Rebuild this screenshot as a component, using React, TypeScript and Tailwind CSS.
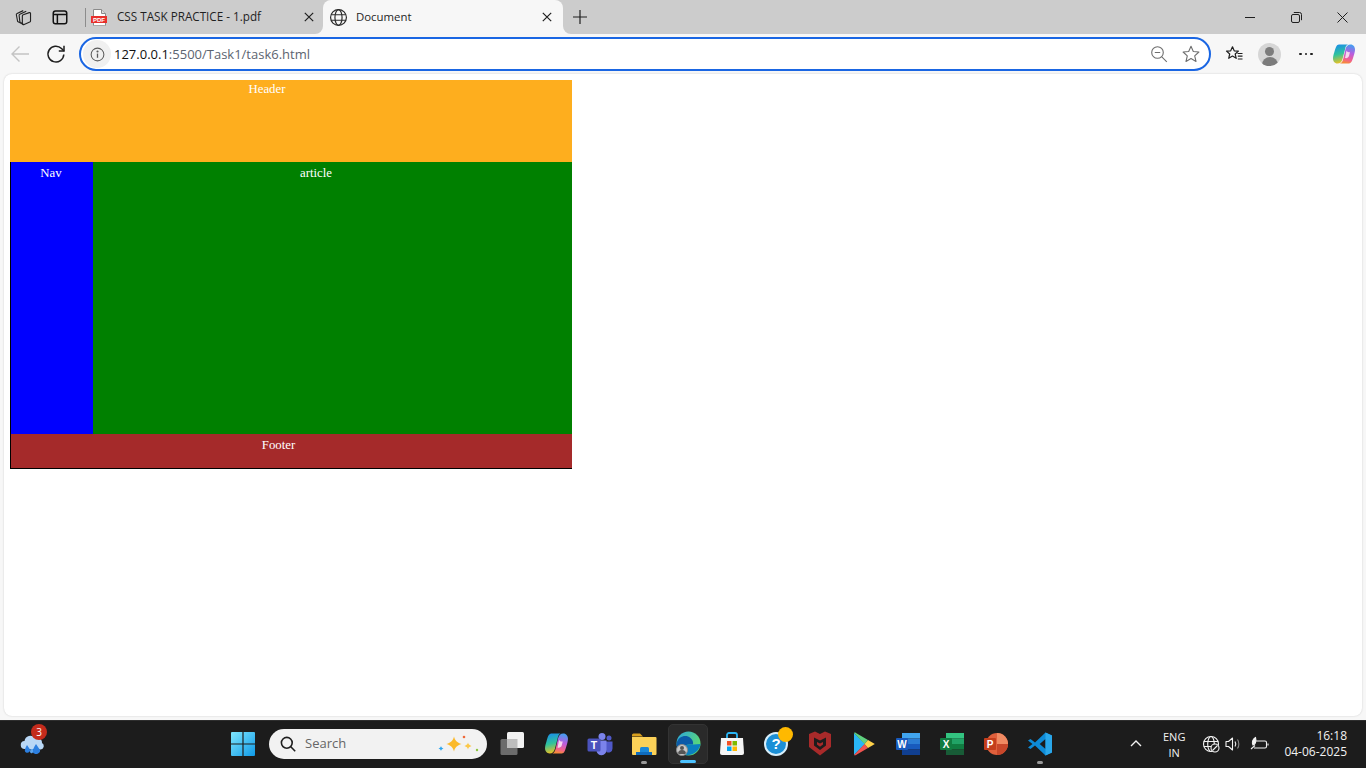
import React from "react";

const UI_FONT = "font-['Open_Sans','Noto_Sans',sans-serif]";

interface IconProps {
  size?: number;
  className?: string;
}

const Svg: React.FC<IconProps & { children: React.ReactNode }> = ({ size = 20, className, children }) => (
  <svg width={size} height={size} viewBox="0 0 24 24" fill="none" className={className}>
    {children}
  </svg>
);

const CloseIcon = () => (
  <svg width="10" height="10" viewBox="0 0 10 10" stroke="#1f1f1f" strokeWidth="1.2">
    <path d="M.8.8l8.4 8.4M9.2.8L.8 9.2" />
  </svg>
);

const CollectionsIcon = () => (
  <Svg size={18}>
    <g stroke="#222" strokeWidth="1.500" strokeLinejoin="round">
      <path d="M10 21.500L3.500 18 1.800 9c-.2-.8.2-1.400 1-1.700L11 3.500" />
      <path d="M11 21.500l-4.500-3-1-8.500c-.1-.8.2-1.400 1-1.700L15 4.200" />
      <path d="M9.800 10.500c0-.8.400-1.300 1.200-1.500l8-2.800c1-.3 1.700.2 1.700 1.200v9.800c0 .8-.3 1.300-1 1.600l-7.500 3.200c-1.300.5-2.400-.2-2.400-1.500z" />
    </g>
  </Svg>
);

const TabsIcon = () => (
  <Svg size={18}>
    <rect x="3" y="4" width="18" height="17" rx="3" stroke="#111" strokeWidth="2" />
    <path d="M3 8.500h18M8.500 8.500V21" stroke="#111" strokeWidth="2" />
  </Svg>
);

const PdfIcon = () => (
  <svg width="16" height="17" viewBox="0 0 16 17">
    <path d="M2.500.5h8l4 4v11.500a.8.8 0 0 1-.8.8H3.300a.8.8 0 0 1-.8-.8z" fill="#fff" stroke="#8a8a8a" />
    <path d="M10.500.5v4h4" fill="#ddd" stroke="#8a8a8a" />
    <rect x="0" y="7" width="16" height="7" fill="#e8302c" />
    <text x="8" y="12.800" textAnchor="middle" fontSize="6" fontWeight="700" fill="#fff" fontFamily="Liberation Sans">PDF</text>
  </svg>
);

const GlobeIcon = () => (
  <Svg size={19}>
    <g stroke="#2b2b2b" strokeWidth="1.500">
      <circle cx="12" cy="12" r="10" />
      <ellipse cx="12" cy="12" rx="4.500" ry="10" />
      <path d="M2.600 8.500h18.800M2.600 15.500h18.800" />
    </g>
  </Svg>
);

const CopilotIcon: React.FC<{ size?: number; id: string }> = ({ size = 24, id }) => (
  <svg width={size} height={size} viewBox="0 0 24 24">
    <defs>
      <linearGradient id={`${id}A`} x1="0.300" y1="0" x2="0.500" y2="1">
        <stop offset="0" stopColor="#1a8fe8" />
        <stop offset="0.500" stopColor="#2fc39c" />
        <stop offset="1" stopColor="#f6c21c" />
      </linearGradient>
      <linearGradient id={`${id}B`} x1="0.700" y1="0" x2="0.500" y2="1">
        <stop offset="0" stopColor="#3fa0f2" />
        <stop offset="0.450" stopColor="#b85de0" />
        <stop offset="0.800" stopColor="#f2608f" />
        <stop offset="1" stopColor="#f58a3a" />
      </linearGradient>
    </defs>
    <path d="M7 2.500h9c-2 .8-2.500 2.500-3 5L10.500 17c-.8 3-2.300 4.500-5 4.500C2.500 21.500 1 19 1 16.500c0-2 .6-4.200 1.300-6.300C3.500 6 4.500 2.500 7 2.500z" fill={`url(#${id}A)`} />
    <path d="M17 21.500H8c2-.8 2.700-2.500 3.300-5L13.500 7c.8-3 2.300-4.500 5-4.500 3 0 4.500 2.500 4.500 5 0 2-.6 4.200-1.300 6.300C20.500 18 19.500 21.500 17 21.500z" fill={`url(#${id}B)`} />
    <path d="M14.500 8.500c.5 1.500 2 2 3.500 1.500l-1 4c-.5 1.500-2 2.500-4 2z" fill="#f7d7ee" />
  </svg>
);

const Toolbar = () => (
  <div className="flex items-center h-[40px] bg-[#f7f7f7] shrink-0">
    <div className="w-[40px] flex justify-center">
      <svg width="20" height="18" viewBox="0 0 20 18" fill="none" stroke="#c4c4c4" strokeWidth="1.400">
        <path d="M19 9H2M9.500 1.500L2 9l7.500 7.500" />
      </svg>
    </div>
    <div className="w-[32px] flex justify-center">
      <svg width="20" height="20" viewBox="0 0 20 20" fill="none" stroke="#1f1f1f" strokeWidth="1.500">
        <path d="M17.800 10.500a7.900 7.900 0 1 1-2.300-6L18 7" />
        <path d="M18 1.800V7h-5.200" />
      </svg>
    </div>
    <div className="ml-[7px] w-[1132px] h-[34px] rounded-full border-2 border-[#1a66e3] bg-white flex items-center pl-[2px] pr-[9px]">
      <div className="w-[28px] h-[28px] rounded-full bg-[#f0f0f0] flex items-center justify-center">
        <svg width="15" height="15" viewBox="0 0 16 16" fill="none" stroke="#5a5a5a" strokeWidth="1.100">
          <circle cx="8" cy="8" r="6.800" />
          <path d="M8 7v4.500" strokeWidth="1.400" />
          <circle cx="8" cy="4.800" r=".6" fill="#5a5a5a" />
        </svg>
      </div>
      <span className={`ml-[3px] text-[13px] leading-none text-[#5c6470] ${UI_FONT}`}>
        <span className="text-[#111]">127.0.0.1</span>:5500/Task1/task6.html
      </span>
      <div className="ml-auto flex items-center gap-[14px]">
        <svg width="18" height="18" viewBox="0 0 18 18" fill="none" stroke="#6e6e6e" strokeWidth="1.100">
          <circle cx="7.500" cy="7.500" r="5.800" />
          <path d="M4.800 7.500h5.400M11.800 11.800l5 5" />
        </svg>
        <svg width="18" height="18" viewBox="0 0 18 18" fill="none" stroke="#6e6e6e" strokeWidth="1.100" strokeLinejoin="round">
          <path d="M9 1.300l2.300 5.200 5.600.5-4.200 3.800 1.300 5.600L9 13.500l-5 2.900 1.300-5.600L1.100 7l5.600-.5z" />
        </svg>
      </div>
    </div>
    <div className="flex-1 flex items-center pl-[14px]">
      <svg width="18" height="18" viewBox="0 0 18 18" fill="none" stroke="#1f1f1f" strokeWidth="1.200" strokeLinejoin="round">
        <path d="M7.500 1.800l1.700 4 4.200.3-3.200 2.900 1 4.300-3.700-2.300-3.800 2.300 1-4.300L1.500 6.100l4.200-.3z" />
        <path d="M12.500 8.500h5M12.800 11.200h4.700M12.800 14h4.700" />
      </svg>
      <div className="ml-[15px] w-[23px] h-[23px] rounded-full bg-[#d6d6d6] overflow-hidden flex flex-col items-center">
        <div className="mt-[4px] w-[9px] h-[9px] rounded-full bg-[#7c7c7c]" />
        <div className="mt-[1px] w-[16px] h-[9px] rounded-t-full bg-[#7c7c7c]" />
      </div>
      <div className="ml-[13px] w-[24px] flex justify-center gap-[3px]">
        <i className="w-[2.500px] h-[2.500px] rounded-full bg-[#1f1f1f]" />
        <i className="w-[2.500px] h-[2.500px] rounded-full bg-[#1f1f1f]" />
        <i className="w-[2.500px] h-[2.500px] rounded-full bg-[#1f1f1f]" />
      </div>
      <div className="ml-[14px]">
        <CopilotIcon id="copTop" />
      </div>
    </div>
  </div>
);

const TabStrip = () => (
  <div className="flex h-[34px] bg-[#f7f7f7] shrink-0">
    <div className="w-[323px] bg-[#cccccc] rounded-br-lg flex items-center">
      <div className="w-[48px] flex justify-center">
        <CollectionsIcon />
      </div>
      <div className="w-[24px] flex justify-center">
        <TabsIcon />
      </div>
      <div className="ml-[13px] w-px h-[19px] bg-[#8c8c8c]" />
      <div className="ml-[5px]">
        <PdfIcon />
      </div>
      <span className={`ml-[10px] mb-[1px] text-[11.7px] text-[#1f1f1f] whitespace-nowrap ${UI_FONT}`}>CSS TASK PRACTICE - 1.pdf</span>
      <div className="ml-auto mr-[9px] flex">
        <CloseIcon />
      </div>
    </div>
    <div className="w-[240px] bg-[#cccccc]">
      <div className="h-full bg-[#f7f7f7] rounded-t-lg flex items-center pl-[5px] pr-[11px]">
        <div className="w-[20px] flex justify-center">
          <GlobeIcon />
        </div>
        <span className={`ml-[8px] mb-[1px] text-[11.4px] text-[#1f1f1f] ${UI_FONT}`}>Document</span>
        <div className="ml-auto flex">
          <CloseIcon />
        </div>
      </div>
    </div>
    <div className="flex-1 bg-[#cccccc] rounded-bl-lg flex items-center">
      <div className="ml-[9px] flex">
        <svg width="16" height="16" viewBox="0 0 16 16" stroke="#1f1f1f" strokeWidth="1.200">
          <path d="M8 1v14M1 8h14" />
        </svg>
      </div>
      <div className="ml-auto mr-[1px] flex items-center">
        <div className="w-[46px] flex justify-center">
          <div className="w-[10px] h-px bg-[#1f1f1f]" />
        </div>
        <div className="w-[46px] flex justify-center">
          <svg width="11" height="11" viewBox="0 0 11 11" fill="none" stroke="#1f1f1f">
            <rect x=".5" y="2.500" width="8" height="8" rx="1.500" />
            <path d="M2.800.5h5.700a2 2 0 0 1 2 2v5.700" />
          </svg>
        </div>
        <div className="w-[46px] flex justify-center">
          <svg width="11" height="11" viewBox="0 0 11 11" stroke="#1f1f1f">
            <path d="M.5.5l10 10M10.500.5l-10 10" />
          </svg>
        </div>
      </div>
    </div>
  </div>
);

// the page under test: grid boxes from task6.html
const PageContent = () => (
  <div className="flex-1 mx-[4px] bg-white rounded-lg shadow-[0_0_2px_rgba(0,0,0,0.18)] pt-[6px] pl-[6px]">
    <div className="w-[562px] text-[12.8px] leading-[15px] text-white text-center font-['Liberation_Serif',serif]">
      <div className="h-[82px] bg-[#feae1e] pt-[2px] pr-[48px]">Header</div>
      <div className="border-l border-black flex h-[272px]">
        <div className="w-[82px] bg-[#0000ff] pt-[4px] pr-[2px]">Nav</div>
        <div className="flex-1 bg-[#008000] pt-[4px] pr-[33px]">article</div>
      </div>
      <div className="h-[35px] bg-[#a52a2a] border-l border-b border-black pt-[4px] pr-[26px]">Footer</div>
    </div>
  </div>
);

const AppSlot: React.FC<{ children: React.ReactNode; active?: boolean; open?: boolean }> = ({ children, active, open }) => (
  <div className="w-[44px] flex justify-center">
    <div className={`relative w-[40px] h-[40px] rounded-[5px] flex items-center justify-center ${active ? "bg-[#2a2a2a] border border-[#333]" : ""}`}>
      {children}
      {open && <div className="absolute bottom-[0px] left-1/2 -translate-x-1/2 w-[6px] h-[3px] rounded-full bg-[#9a9a9a]" />}
      {active && <div className="absolute bottom-[0px] left-1/2 -translate-x-1/2 w-[16px] h-[3px] rounded-full bg-[#4cc2ff]" />}
    </div>
  </div>
);

const WeatherIcon = () => (
  <div className="relative w-[26px] h-[26px] mt-[3px]">
    <svg width="26" height="26" viewBox="0 0 26 26">
      <path d="M6 17a4 4 0 0 1-.5-8A6 6 0 0 1 16 6a5 5 0 0 1 7 5 3.500 3.500 0 0 1-1 6.500z" fill="#b9d7f5" />
      <path d="M8 13l3 4.500c1 3-3.500 4.500-5 2-.7-1.500.7-4.500 2-6.500z" fill="#2c7fe0" />
      <path d="M17 12l4 6c1 3.500-5 5.500-7 2.500-1-2 1.500-6 3-8.500z" fill="#2c7fe0" />
      <path d="M11.500 17h2.500v3c-.5 2-3 1.500-3-.5z" fill="#5aa5f0" />
    </svg>
    <div className="absolute -top-[8px] -right-[2px] w-[16px] h-[16px] rounded-full bg-[#c42b1c] text-white text-[10px] leading-[16px] text-center font-['Open_Sans',sans-serif]">3</div>
  </div>
);

const WindowsLogo = () => (
  <svg width="24" height="24" viewBox="0 0 24 24">
    <defs>
      <linearGradient id="winG" x1="0" y1="0" x2="1" y2="1">
        <stop offset="0" stopColor="#7fe6fd" />
        <stop offset="1" stopColor="#0f9ae8" />
      </linearGradient>
    </defs>
    <path d="M0 1a1 1 0 0 1 1-1h10.400v11.400H0zM12.600 0H23a1 1 0 0 1 1 1v10.400H12.600zM0 12.600h11.400V24H1a1 1 0 0 1-1-1zM12.600 12.600H24V23a1 1 0 0 1-1 1H12.600z" fill="url(#winG)" />
  </svg>
);

const SearchBox = () => (
  <div className="ml-[4px] mr-[3px] w-[218px] h-[30px] rounded-full bg-[#f2f2f2] flex items-center pl-[11px]">
    <svg width="16" height="16" viewBox="0 0 16 16" fill="none" stroke="#1f1f1f" strokeWidth="1.600">
      <circle cx="6.800" cy="6.800" r="5.400" />
      <path d="M10.800 10.800l4.400 4.400" />
    </svg>
    <span className={`ml-[9px] mt-[1px] text-[13px] text-[#666] ${UI_FONT}`}>Search</span>
    <svg width="46" height="24" viewBox="0 0 46 24" className="ml-auto mr-[8px]">
      <path d="M21 4.500c1 4 3 6 7.500 7.500-4.500 1.500-6.500 3.500-7.500 7.500-1-4-3-6-7.500-7.500 4.500-1.500 6.500-3.500 7.500-7.500z" fill="#fbb92a" />
      <path d="M35 10.500c.4 1.800 1.300 2.700 3.500 3.500-2.200.8-3.100 1.700-3.500 3.500-.4-1.800-1.300-2.700-3.500-3.500 2.200-.8 3.100-1.700 3.500-3.500z" fill="#fbc84a" />
      <path d="M8 14c.3 1.200.8 1.700 2.500 2.500-1.700.8-2.200 1.300-2.500 2.500-.3-1.200-.8-1.700-2.500-2.500 1.700-.8 2.200-1.300 2.500-2.500z" fill="#2aa5f0" />
      <circle cx="31" cy="5" r="1.300" fill="#ef6a3a" />
      <circle cx="44" cy="18" r="1.200" fill="#8cc63f" />
    </svg>
  </div>
);

const TaskViewIcon = () => (
  <svg width="25" height="25" viewBox="0 0 25 25">
    <rect x="0.500" y="8" width="17" height="16" rx="1.500" fill="#6c6c6c" />
    <rect x="7" y="1" width="17" height="16" rx="1.500" fill="#f2f2f2" />
    <rect x="7" y="8" width="10.500" height="9" fill="#bdbdbd" />
  </svg>
);

const TeamsIcon = () => (
  <svg width="26" height="24" viewBox="0 0 26 24">
    <circle cx="15" cy="4.500" r="3.500" fill="#7b83eb" />
    <circle cx="22" cy="6" r="2.500" fill="#5059c9" />
    <path d="M17 9.500h8.500v7a4 4 0 0 1-6 3.500z" fill="#5059c9" />
    <path d="M8 8.500h11.500v9.500a5 5 0 0 1-10 .5z" fill="#7b83eb" />
    <rect x="0.500" y="6.500" width="13" height="13" rx="1.500" fill="#4b53bc" />
    <text x="7" y="17" textAnchor="middle" fontSize="10.500" fontWeight="700" fill="#fff" fontFamily="Liberation Sans">T</text>
  </svg>
);

const FolderIcon = () => (
  <svg width="26" height="24" viewBox="0 0 26 24">
    <path d="M1 3a1.500 1.500 0 0 1 1.500-1.500h6.500l3 3h-11z" fill="#d9a01e" />
    <path d="M1 5h23.500a1 1 0 0 1 1 1v16a1 1 0 0 1-1 1H2a1 1 0 0 1-1-1z" fill="#fbd158" />
    <path d="M9 16.500a1.500 1.500 0 0 1 1.500-1.500h6a1.500 1.500 0 0 1 1.500 1.500V23H9z" fill="#1b88d8" />
    <rect x="5" y="20" width="16" height="3" fill="#0f6cbd" />
  </svg>
);

const EdgeIcon = () => (
  <div className="relative w-[25px] h-[25px]">
    <svg width="25" height="25" viewBox="0 0 25 25">
      <defs>
        <linearGradient id="edgeG" x1="0" y1="0" x2="1" y2="0.6">
          <stop offset="0" stopColor="#2aa5de" />
          <stop offset="1" stopColor="#5fdc6e" />
        </linearGradient>
      </defs>
      <circle cx="12.500" cy="12.500" r="12" fill="url(#edgeG)" />
      <path d="M.5 12.500C2 6 8 4 12 5.500c4.500 1.800 5.500 5.500 5 8-5 0-11 0-11 5 0 2.500 3 5.500 7 6C6 24.800.5 19 .5 12.500z" fill="#0b5aa8" />
      <path d="M24.500 13c-1 7-8 11.500-13 11-3-1-5-3.500-5-6 0-2.500 2.500-4.500 11-4.500z" fill="#0a7fc0" />
    </svg>
    <div className="absolute left-[0px] bottom-[0px] w-[12px] h-[12px] rounded-full bg-[#c8c8c8] flex flex-col items-center overflow-hidden border border-[#8a8a8a]">
      <div className="mt-[1px] w-[4px] h-[4px] rounded-full bg-[#555]" />
      <div className="w-[8px] h-[4px] rounded-t-full bg-[#555]" />
    </div>
  </div>
);

const StoreIcon = () => (
  <svg width="24" height="24" viewBox="0 0 24 24">
    <path d="M7 6V3a2 2 0 0 1 2-2h6a2 2 0 0 1 2 2v3" fill="none" stroke="#29b6f6" strokeWidth="1.800" />
    <path d="M1 6h22l1 15a2 2 0 0 1-2 2H2a2 2 0 0 1-2-2z" fill="#f5f5f5" />
    <rect x="7" y="9" width="4.500" height="4.500" fill="#f25022" />
    <rect x="12.500" y="9" width="4.500" height="4.500" fill="#7fba00" />
    <rect x="7" y="14.500" width="4.500" height="4.500" fill="#00a4ef" />
    <rect x="12.500" y="14.500" width="4.500" height="4.500" fill="#ffb900" />
  </svg>
);

const HelpIcon = () => (
  <div className="relative w-[24px] h-[24px]">
    <div className="w-[24px] h-[24px] rounded-full bg-[#1b8fd6] border-2 border-[#d7eefa] flex items-center justify-center text-white text-[15px] font-bold leading-none font-['Liberation_Sans',sans-serif]">?</div>
    <div className="absolute -top-[5px] -right-[5px] w-[15px] h-[15px] rounded-full bg-[#ffb900]" />
  </div>
);

const McAfeeIcon = () => (
  <svg width="24" height="25" viewBox="0 0 24 25">
    <path d="M1 3l6 -2.500 5 2.500 5 -2.500 6 2.500v13l-11 8.500-11-8.500z" fill="#a82a2a" />
    <path d="M6 6.500l6 3 6-3v8l-6 4.500-6-4.500z" fill="#1c1c1c" />
    <path d="M9 11l3 1.500 3-1.500v2.500l-3 2.200-3-2.200z" fill="#a82a2a" />
  </svg>
);

const PlayIcon = () => (
  <svg width="22" height="24" viewBox="0 0 22 24">
    <path d="M1 1l11 11L1 23z" fill="#29b6f6" />
    <path d="M1 1c.5-.5 1.300-.6 2 0l12 7-3.500 4z" fill="#5fd17f" />
    <path d="M1 23c.5.5 1.300.6 2 0l12-7-3.500-4z" fill="#ef5350" />
    <path d="M15 8l6 3.500c.8.500.8.500 0 1L15 16l-3.500-4z" fill="#ffd24a" />
  </svg>
);

const OfficeTile: React.FC<{ letter: string; tile: string; bands: string[] }> = ({ letter, tile, bands }) => (
  <svg width="24" height="22" viewBox="0 0 24 22">
    <rect x="6" y="0" width="18" height="5.500" fill={bands[0]} />
    <rect x="6" y="5.500" width="18" height="5.500" fill={bands[1]} />
    <rect x="6" y="11" width="18" height="5.500" fill={bands[2]} />
    <rect x="6" y="16.500" width="18" height="5.500" fill={bands[3]} />
    <rect x="0" y="5" width="12" height="12" rx="1" fill={tile} />
    <text x="6" y="14.500" textAnchor="middle" fontSize="10" fontWeight="700" fill="#fff" fontFamily="Liberation Sans">{letter}</text>
  </svg>
);

const PowerPointIcon = () => (
  <svg width="24" height="24" viewBox="0 0 24 24">
    <circle cx="13" cy="12" r="11" fill="#e0603c" />
    <path d="M13 1a11 11 0 0 1 11 11H13z" fill="#f08a62" />
    <path d="M13 12h11a11 11 0 0 1-11 11z" fill="#c8472a" />
    <rect x="0" y="6" width="12" height="12" rx="1" fill="#c43e1c" />
    <text x="6" y="15.500" textAnchor="middle" fontSize="10" fontWeight="700" fill="#fff" fontFamily="Liberation Sans">P</text>
  </svg>
);

const VsCodeIcon = () => (
  <svg width="24" height="24" viewBox="0 0 24 24">
    <path d="M17.500 0.500L24 3.500v17l-6.500 3L7 13.500 2.500 17 0 15.500 4.500 12 0 8.500 2.500 7 7 10.500z" fill="#0e8ad6" />
    <path d="M17.500 7l-5.800 5 5.800 5z" fill="#1c1c1c" />
    <path d="M17.500 0.500L24 3.500v17l-6.500 3z" fill="#2aa7ea" />
  </svg>
);

const TrayIcons = () => (
  <div className="flex items-center gap-[5px] ml-[17px]">
    <svg width="18" height="18" viewBox="0 0 18 18" fill="none" stroke="#f2f2f2" strokeWidth="1.100">
      <circle cx="9" cy="9" r="7.500" />
      <ellipse cx="9" cy="9" rx="3.300" ry="7.500" />
      <path d="M1.800 6.500h14.400M1.800 11.500h14.400" />
      <circle cx="13" cy="13" r="4" fill="#1c1c1c" />
      <path d="M10.500 15.500l5-5" />
    </svg>
    <svg width="17" height="16" viewBox="0 0 17 16" fill="none" stroke="#f2f2f2" strokeWidth="1.100">
      <path d="M1 5.500h2.500L7.500 2v12l-4-3.500H1z" strokeLinejoin="round" />
      <path d="M10 5.500c1 1.500 1 3.500 0 5" />
      <path d="M12.500 3.500c1.800 2.500 1.800 6.500 0 9" stroke="#8a8a8a" />
    </svg>
    <svg width="19" height="16" viewBox="0 0 19 16" fill="none" stroke="#f2f2f2" strokeWidth="1.100" className="ml-[3px]">
      <path d="M1 13l4-3.500M5.500 1.500C3 3 1.500 6 3 9c2-.5 3.800-3 2.500-7.500z" fill="#f2f2f2" />
      <path d="M6 5h9a1.500 1.500 0 0 1 1.500 1.500v4A1.500 1.500 0 0 1 15 12H4" />
      <path d="M18 7.500v2" />
    </svg>
  </div>
);

const Taskbar = () => (
  <div className="h-[48px] bg-[#1c1c1c] border-t border-[#2e2e2e] shrink-0 flex items-center pb-[2px]">
    <div className="ml-[19px] w-[202px]">
      <WeatherIcon />
    </div>
    <AppSlot>
      <WindowsLogo />
    </AppSlot>
    <SearchBox />
    <AppSlot><TaskViewIcon /></AppSlot>
    <AppSlot><CopilotIcon id="copBar" size={25} /></AppSlot>
    <AppSlot><TeamsIcon /></AppSlot>
    <AppSlot open><FolderIcon /></AppSlot>
    <AppSlot active><EdgeIcon /></AppSlot>
    <AppSlot><StoreIcon /></AppSlot>
    <AppSlot><HelpIcon /></AppSlot>
    <AppSlot><McAfeeIcon /></AppSlot>
    <AppSlot><PlayIcon /></AppSlot>
    <AppSlot><OfficeTile letter="W" tile="#185abd" bands={["#41a5ee", "#2b7cd3", "#185abd", "#103f91"]} /></AppSlot>
    <AppSlot><OfficeTile letter="X" tile="#107c41" bands={["#33c481", "#21a366", "#107c41", "#185c37"]} /></AppSlot>
    <AppSlot><PowerPointIcon /></AppSlot>
    <AppSlot open><VsCodeIcon /></AppSlot>
    <div className="ml-[68px] flex">
      <svg width="12" height="7" viewBox="0 0 12 7" fill="none" stroke="#f2f2f2" strokeWidth="1.400">
        <path d="M1 6l5-5 5 5" />
      </svg>
    </div>
    <div className={`ml-[21px] mt-[2px] text-[11px] leading-[16px] text-[#f2f2f2] text-center ${UI_FONT}`}>
      ENG
      <br />
      IN
    </div>
    <TrayIcons />
    <div className={`ml-auto mr-[19px] text-[12px] leading-[16px] text-[#f2f2f2] text-right ${UI_FONT}`}>
      16:18
      <br />
      04-06-2025
    </div>
  </div>
);

export default function App() {
  return (
    <div className="h-screen w-screen overflow-hidden flex flex-col bg-[#f7f7f7]">
      <TabStrip />
      <Toolbar />
      <PageContent />
      <div className="h-[4px] shrink-0" />
      <Taskbar />
    </div>
  );
}
